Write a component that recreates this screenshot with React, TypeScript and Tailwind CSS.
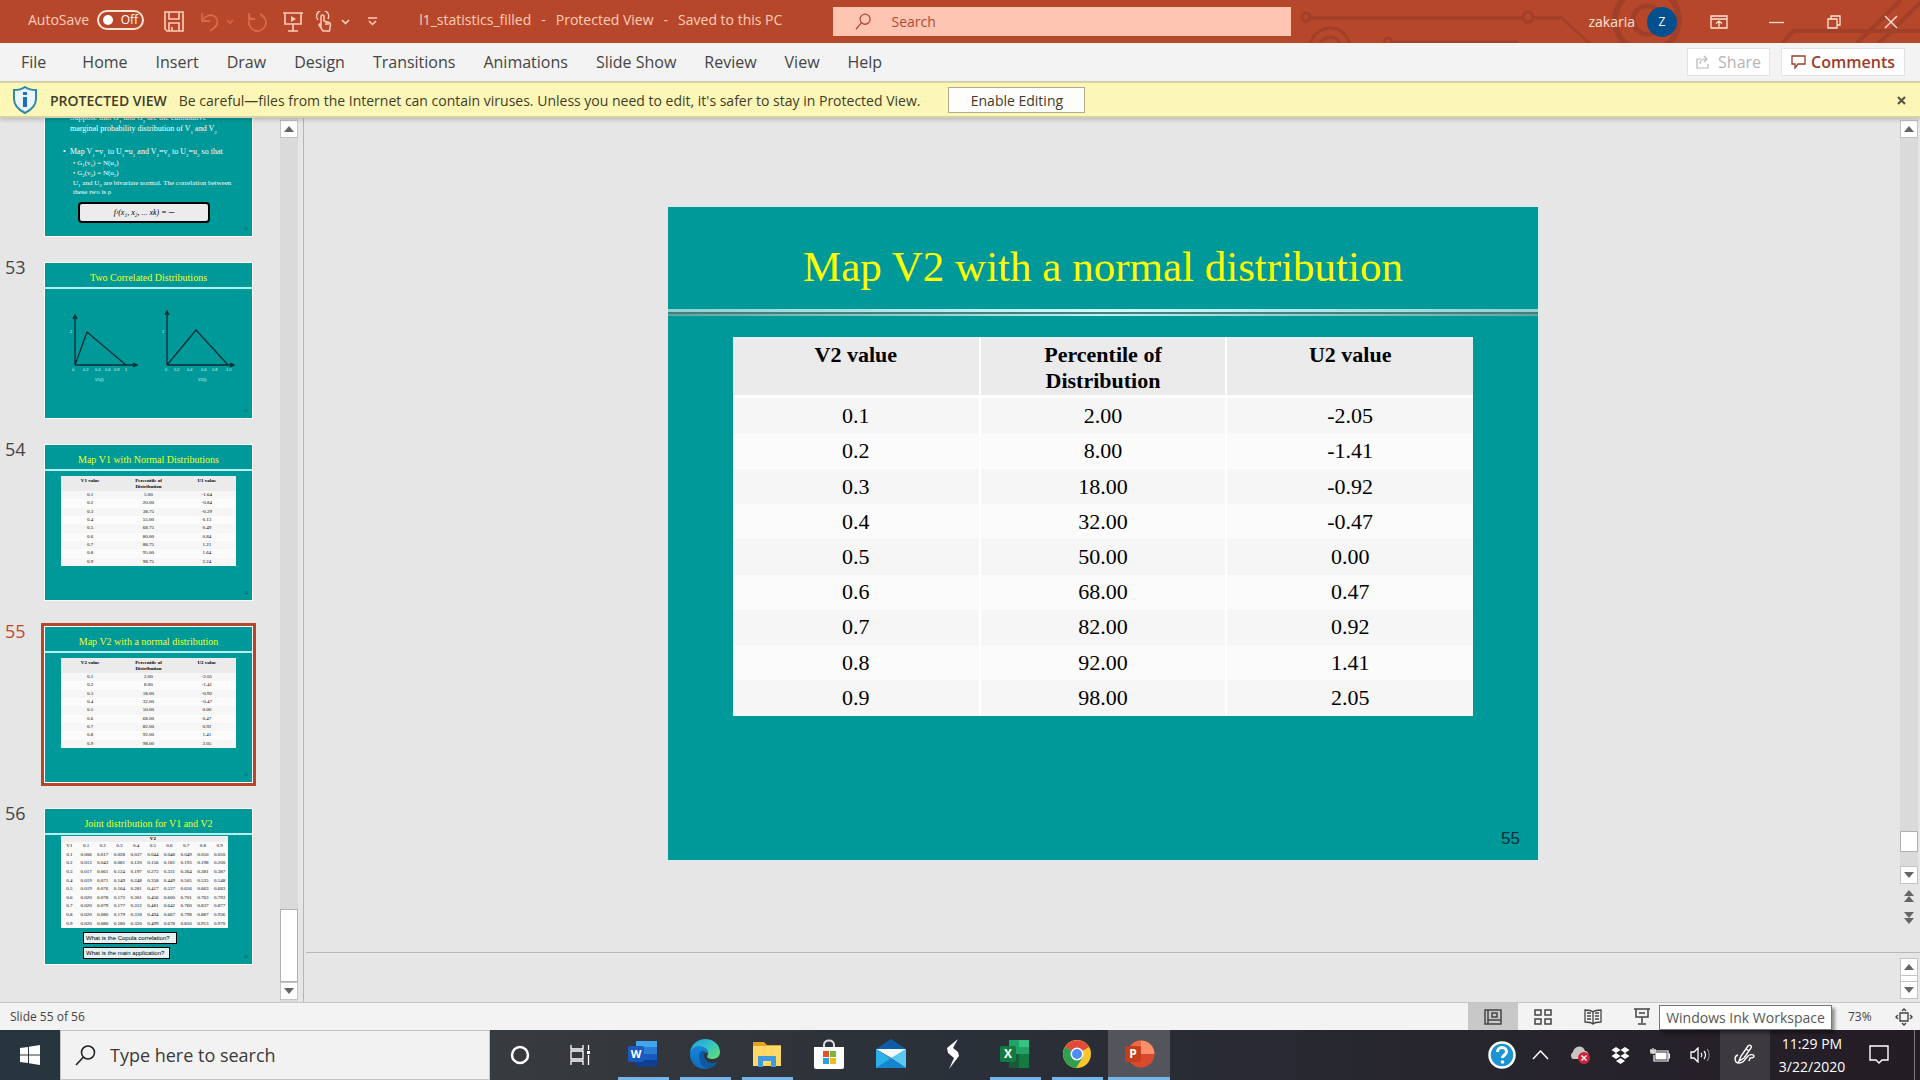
import React, { useState } from 'react';

const tabs = ['Home', 'Insert', 'Draw', 'Design', 'Transitions', 'Animations', 'Slide Show', 'Review', 'View', 'Help'];

const v1Rows = [
  ['0.1', '5.00', '-1.64'],
  ['0.2', '20.00', '-0.84'],
  ['0.3', '38.75', '-0.29'],
  ['0.4', '55.00', '0.13'],
  ['0.5', '68.75', '0.49'],
  ['0.6', '80.00', '0.84'],
  ['0.7', '88.75', '1.21'],
  ['0.8', '95.00', '1.64'],
  ['0.9', '98.75', '2.24'],
];

const v2Rows = [
  ['0.1', '2.00', '-2.05'],
  ['0.2', '8.00', '-1.41'],
  ['0.3', '18.00', '-0.92'],
  ['0.4', '32.00', '-0.47'],
  ['0.5', '50.00', '0.00'],
  ['0.6', '68.00', '0.47'],
  ['0.7', '82.00', '0.92'],
  ['0.8', '92.00', '1.41'],
  ['0.9', '98.00', '2.05'],
];

const jointRows = [
  'V1 0.1 0.2 0.3 0.4 0.5 0.6 0.7 0.8 0.9',
  '0.1 0.006 0.017 0.028 0.037 0.044 0.048 0.049 0.050 0.050',
  '0.2 0.013 0.043 0.081 0.120 0.156 0.181 0.193 0.198 0.200',
  '0.3 0.017 0.061 0.124 0.197 0.273 0.331 0.364 0.381 0.387',
  '0.4 0.019 0.071 0.149 0.248 0.358 0.449 0.505 0.535 0.548',
  '0.5 0.019 0.076 0.164 0.281 0.417 0.537 0.616 0.663 0.683',
  '0.6 0.020 0.078 0.173 0.301 0.456 0.600 0.701 0.763 0.793',
  '0.7 0.020 0.079 0.177 0.312 0.481 0.642 0.760 0.837 0.877',
  '0.8 0.020 0.080 0.179 0.318 0.494 0.667 0.798 0.887 0.936',
  '0.9 0.020 0.080 0.180 0.320 0.499 0.678 0.816 0.913 0.970',
].map((line) => line.split(' '));

const Sub = ({ children }: { children: React.ReactNode }) => (
  <span className="align-sub text-[5px] leading-none">{children}</span>
);

/* ---------- title bar ---------- */

const Circuit = () => (
  <svg className="absolute right-0 top-0 h-full w-[629px]" viewBox="0 0 629 43" fill="none" stroke="#a23f28" strokeWidth="3">
    <circle cx="15" cy="17" r="4" />
    <path d="M20 18h212" />
    <circle cx="237" cy="17" r="5" />
    <path d="M243 18h28l28 26" />
    <circle cx="39" cy="48" r="20" />
    <circle cx="39" cy="48" r="11" />
    <circle cx="97" cy="42" r="4" />
    <path d="M102 42h125" />
    <circle cx="356" cy="20" r="32" strokeWidth="6" />
    <circle cx="356" cy="20" r="14" strokeWidth="5" />
    <path d="M492 43l10-12h127M566 43l44-43M588 43l44-43" strokeWidth="4" />
  </svg>
);

const TitleBar = () => {
  const [autoSave, setAutoSave] = useState(false);
  return (
    <header className="relative grid h-[43px] shrink-0 grid-cols-[833fr_458fr_629fr] items-center bg-[#b7472a] text-[15px] text-[#ffcdbb]">
      <Circuit />
      <div className="flex items-center pb-2 pl-7">
        <label className="relative flex items-center gap-2 pt-1 text-sm leading-5">
          AutoSave
          <input type="checkbox" className="sr-only" checked={autoSave} onChange={() => setAutoSave(!autoSave)} />
          <span className="flex h-5 w-[47px] items-center justify-between rounded-full border-2 border-[#ffe3d8] pl-1 pr-1 text-xs text-white">
            <span className="size-[10px] rounded-full bg-white" />
            {autoSave ? 'On' : 'Off'}
          </span>
        </label>
        <button aria-label="Save" className="ml-5 pt-2">
          <svg width="20" height="21" viewBox="0 0 20 21" fill="none" stroke="#ffcdbb" strokeWidth="1.6">
            <path d="M1 1h18v19H3l-2-2zM5 1v7h10V1M5 20v-8h10v8M8 20v-4" />
          </svg>
        </button>
        <button aria-label="Undo" className="ml-4 flex items-center gap-1 pt-2">
          <svg width="22" height="20" viewBox="0 0 22 20" fill="none" stroke="#d9694b" strokeWidth="1.8">
            <path d="M2 1v8h8M2 9c3-5 8-7 12-5 5 3 4 9 0 12l-4 3" />
          </svg>
          <svg width="8" height="5" viewBox="0 0 8 5" fill="none" stroke="#d9694b" strokeWidth="1.6"><path d="M1 1l3 3 3-3" /></svg>
        </button>
        <button aria-label="Redo" className="ml-[13px] pt-2">
          <svg width="21" height="20" viewBox="0 0 21 20" fill="none" stroke="#d9694b" strokeWidth="1.8">
            <path d="M2 1v6h6M4 5c-4 5-2 13 6 14 8 0 12-9 6-15l-3-2" />
          </svg>
        </button>
        <button aria-label="Start from beginning" className="ml-[15px] pt-2">
          <svg width="20" height="20" viewBox="0 0 20 20" fill="none" stroke="#ffcdbb" strokeWidth="1.6">
            <path d="M0 1h20M2 1v11h16V1M10 12v7M5 19h10" />
            <path d="M8 4l5 3-5 3z" fill="#ffcdbb" stroke="none" />
          </svg>
        </button>
        <button aria-label="Touch mode" className="ml-3 flex items-center gap-2 pt-2">
          <svg width="18" height="21" viewBox="0 0 18 21" fill="none" stroke="#ffcdbb" strokeWidth="1.5">
            <path d="M3 9a6 6 0 1 1 10-1" />
            <path d="M6 14V5.500a1.500 1.500 0 0 1 3 0V10l5 1.500c1 .3 1.500 1 1.500 2l-1 6.500H8l-4-6c0-1.500 1-1.500 2 0zM11 11v3M13 12v2" />
          </svg>
          <svg width="9" height="6" viewBox="0 0 9 6" fill="none" stroke="#ffcdbb" strokeWidth="1.6"><path d="M1 1l3.500 3.500L8 1" /></svg>
        </button>
        <button aria-label="Customize Quick Access Toolbar" className="ml-[18px] pt-2">
          <svg width="9" height="9" viewBox="0 0 9 9" fill="none" stroke="#ffcdbb" strokeWidth="1.5"><path d="M0 1h9M1 4l3.500 3.500L8 4" /></svg>
        </button>
        <h1 className="ml-[42px] flex gap-[10px] whitespace-nowrap pt-1 text-sm leading-5">
          <span>l1_statistics_filled</span>
          <span>-</span>
          <span>Protected View</span>
          <span>-</span>
          <span>Saved to this PC</span>
        </h1>
      </div>
      <label className="flex h-[29px] items-center gap-5 bg-[#fec5b2] pl-[22px]">
        <svg width="18" height="19" viewBox="0 0 18 19" fill="none" stroke="#ad4b35" strokeWidth="1.4">
          <circle cx="11" cy="7" r="5.500" />
          <path d="M7 11l-6 7" />
        </svg>
        <input aria-label="Search" placeholder="Search" className="w-full bg-transparent text-sm outline-none placeholder:text-[#ad4b35]" />
      </label>
      <div className="relative flex h-full items-center justify-end text-white">
        <span className="mr-3 text-sm text-[#ffe3d8]">zakaria</span>
        <span className="mr-[33px] flex size-[30px] items-center justify-center rounded-full bg-[#03508f] text-xs">Z</span>
        <button aria-label="Ribbon display options" className="mr-[41px]">
          <svg width="18" height="14" viewBox="0 0 18 14" fill="none" stroke="#ffe3d8" strokeWidth="1.3">
            <path d="M1 1h16v12H1zM1 4h16M9 12V6M6 8.500L9 6l3 2.500" />
          </svg>
        </button>
        <button aria-label="Minimize" className="mr-[43px]">
          <svg width="15" height="14" viewBox="0 0 15 14" stroke="#ffe3d8" strokeWidth="1.3"><path d="M0 7.500h15" /></svg>
        </button>
        <button aria-label="Restore" className="mr-[43px]">
          <svg width="14" height="14" viewBox="0 0 14 14" fill="none" stroke="#ffe3d8" strokeWidth="1.3">
            <path d="M1 4h9v9H1zM4 4V1h9v9h-3" />
          </svg>
        </button>
        <button aria-label="Close" className="mr-[22px]">
          <svg width="14" height="14" viewBox="0 0 14 14" stroke="#ffe3d8" strokeWidth="1.4"><path d="M1 1l12 12M13 1L1 13" /></svg>
        </button>
      </div>
    </header>
  );
};

const Ribbon = () => (
  <nav className="flex h-[38px] shrink-0 items-center bg-[#f3f3f3] pl-[21px] pr-[15px] text-[16px] text-[#444]">
    <button className="mr-9">File</button>
    <div className="flex gap-7">
      {tabs.map((tab) => (
        <button key={tab}>{tab}</button>
      ))}
    </div>
    <button className="ml-auto flex h-7 items-center gap-2 border border-[#e3e3e3] bg-white px-2 text-[#b5b5b5]">
      <svg width="14" height="14" viewBox="0 0 14 14" fill="none" stroke="#b5b5b5" strokeWidth="1.2">
        <path d="M5 4H1v9h11V9M4 9c0-3 2-5 6-5M8 1l3 3-3 3" />
      </svg>
      Share
    </button>
    <button className="ml-[11px] flex h-7 items-center gap-[5px] border border-[#e3e3e3] bg-white px-[9px] text-[16px] font-semibold text-[#9c3c28]">
      <svg width="15" height="14" viewBox="0 0 15 14" fill="none" stroke="#9c3c28" strokeWidth="1.3">
        <path d="M1 1h13v8H7l-3 4V9H1z" />
      </svg>
      Comments
    </button>
  </nav>
);

const ProtectedBar = () => (
  <div className="z-10 flex h-[37px] shrink-0 items-center border-y-2 border-[#d5d1ab] bg-[#fcf7b6] pl-[13px] pr-[14px] pt-px text-[14px] text-[#3f3c2a] shadow-[0_2px_4px_rgba(0,0,0,0.18)]">
    <svg width="24" height="28" viewBox="0 0 24 28" fill="none">
      <path d="M12 1c3 2 7 3 11 3v9c0 7-5 11-11 14C6 24 1 20 1 13V4c4 0 8-1 11-3z" fill="#eaf6fb" stroke="#3187a8" strokeWidth="2" />
      <path d="M12 6v3M12 11v10" stroke="#1f6fc0" strokeWidth="4" />
    </svg>
    <strong className="ml-[13px] font-semibold">PROTECTED VIEW</strong>
    <p className="ml-3">Be careful—files from the Internet can contain viruses. Unless you need to edit, it's safer to stay in Protected View.</p>
    <button className="ml-7 h-[26px] w-[137px] border border-[#b0ac8c] bg-[#fdfdfb]">Enable Editing</button>
    <button aria-label="Close message" className="ml-auto">
      <svg width="9" height="9" viewBox="0 0 9 9" stroke="#555140" strokeWidth="2"><path d="M1 1l7 7M8 1L1 8" /></svg>
    </button>
  </div>
);

/* ---------- scroll bars ---------- */

const Arrow = ({ down = false }: { down?: boolean }) => (
  <svg width="10" height="6" viewBox="0 0 10 6" fill="#666">
    <path d={down ? 'M0 0h10L5 6z' : 'M0 6h10L5 0z'} />
  </svg>
);

const ScrollButton = ({ down = false, label }: { down?: boolean; label: string }) => (
  <button aria-label={label} className="flex h-[18px] w-full shrink-0 items-center justify-center border border-[#c3c3c3] bg-white">
    <Arrow down={down} />
  </button>
);

/* ---------- slides ---------- */

interface ValueTableProps {
  name: string;
  rows: string[][];
  small?: boolean;
}

const ValueTable = ({ name, rows, small = false }: ValueTableProps) => {
  const head = small ? 'h-[15px] px-2 pb-0 pt-[2px] text-[5px] leading-[6px]' : 'h-[60px] border-b-[3px] border-l-2 px-14 pb-0 pt-[5px] text-[22px] leading-[26px] first:border-l-0';
  const cell = small ? 'text-[5px] leading-[6px]' : 'border-l-2 text-[22px] leading-[26px] first:border-l-0';
  return (
    <table className={`w-full table-fixed text-center text-black ${small ? 'h-[90px]' : 'h-[379px]'}`}>
      <thead>
        <tr className="bg-[#ebebeb]">
          {[`V${name} value`, 'Percentile of Distribution', `U${name} value`].map((title) => (
            <th key={title} className={`border-white align-top font-bold ${head}`}>{title}</th>
          ))}
        </tr>
      </thead>
      <tbody>
        {rows.map((row) => (
          <tr key={row[0]} className="odd:bg-[#f6f6f6] even:bg-[#fbfbfb]">
            {row.map((value, i) => (
              <td key={i} className={`border-white p-0 ${cell}`}>{value}</td>
            ))}
          </tr>
        ))}
      </tbody>
    </table>
  );
};

const Thumb = ({ title, page, children }: { title: string; page: number; children: React.ReactNode }) => (
  <div className="relative h-[155px] font-['Liberation_Serif',serif]">
    <h3 className="flex h-[24px] items-center justify-center pt-1 text-[10px] font-normal text-[#f0ff20]">{title}</h3>
    <div className="h-[2px] bg-[#b5eeee]" />
    {children}
    <span className="absolute bottom-1 right-1 text-[4px] text-[#045]">{page}</span>
  </div>
);

const Slide52 = () => (
  <div className="relative flex h-[155px] flex-col justify-end px-[25px] pb-[13px] font-['Liberation_Serif',serif] text-white">
    <ul className="text-[8px] leading-[10px]">
      <li className="relative whitespace-nowrap before:absolute before:-left-[7px] before:content-['•']">
        Suppose that G<Sub>1</Sub> and G<Sub>2</Sub> are the cumulative
        <br />
        marginal probability distribution of V<Sub>1</Sub> and V<Sub>2</Sub>
      </li>
      <li className="relative mt-[13px] whitespace-nowrap before:absolute before:-left-[7px] before:content-['•']">
        Map V<Sub>1</Sub>=v<Sub>1</Sub> to U<Sub>1</Sub>=u<Sub>1</Sub> and V<Sub>2</Sub>=v<Sub>2</Sub> to U<Sub>2</Sub>=u<Sub>2</Sub> so that
      </li>
    </ul>
    <div className="text-[7px] leading-[10px]">
      <p className="pl-[3px]">• G<Sub>1</Sub>(v<Sub>1</Sub>) = N(u<Sub>1</Sub>)</p>
      <p className="pl-[3px]">• G<Sub>2</Sub>(v<Sub>2</Sub>) = N(u<Sub>2</Sub>)</p>
      <p className="whitespace-nowrap pl-[3px] leading-[8px]">
        U<Sub>1</Sub> and U<Sub>2</Sub> are bivariate normal. The correlation between
        <br />
        these two is ρ
      </p>
    </div>
    <p className="ml-2 mt-[6px] flex h-[21px] w-[132px] items-center justify-center rounded border-2 border-black bg-[#ececec] text-[8px] italic text-black">
      f<Sub>J</Sub>(x₁, x₂, ... xk) = ─
    </p>
    <span className="absolute bottom-1 right-1 text-[4px] text-[#045]">52</span>
  </div>
);

const Triangles = () => (
  <svg width="207" height="129" viewBox="0 26 207 129" fill="none" stroke="#0d2b33" strokeWidth="1.300">
    <path d="M30 102V53M28 56l2-4 2 4M30 102h61M88 100l4 2-4 2M30 102l12-33 39 33" />
    <path d="M122 102V49M120 52l2-4 2 4M122 102h66M185 100l4 2-4 2M122 102l29-35 32 35" />
    <g fill="#d6f5f5" stroke="none" fontSize="4" fontFamily="Liberation Sans">
      <text x="25" y="70">2</text>
      <text x="27" y="108">0</text>
      <text x="38" y="108">0.2</text>
      <text x="50" y="108">0.4</text>
      <text x="60" y="108">0.6</text>
      <text x="69" y="108">0.8</text>
      <text x="80" y="108">1</text>
      <text x="50" y="118">V1(t)</text>
      <text x="117" y="70">2</text>
      <text x="120" y="108">0</text>
      <text x="129" y="108">0.2</text>
      <text x="142" y="108">0.4</text>
      <text x="156" y="108">0.6</text>
      <text x="167" y="108">0.8</text>
      <text x="181" y="108">1.0</text>
      <text x="153" y="118">V2(t)</text>
    </g>
  </svg>
);

const JointTable = () => (
  <div className="pl-4 pt-px">
    <table className="h-[92px] w-[167px] table-fixed bg-[#fafafa] text-center text-[5px] leading-[6px] text-black">
      <thead>
        <tr className="bg-[#efefef]">
          <th />
          <th colSpan={9} className="p-0">V2</th>
        </tr>
      </thead>
      <tbody>
        {jointRows.map((row, r) => (
          <tr key={r}>
            {row.map((value, i) => (
              <td key={i} className="p-0">{value}</td>
            ))}
          </tr>
        ))}
      </tbody>
    </table>
    <div className="ml-[22px] mt-1 flex flex-col items-start gap-[3px] font-['Liberation_Sans',sans-serif] text-[6px] leading-[8px] text-black">
      <p className="w-[94px] whitespace-nowrap border border-black bg-[#e6f2f2] px-[2px] py-px">What is the Copula correlation?</p>
      <p className="w-[87px] whitespace-nowrap border border-black bg-[#e6f2f2] px-[2px] py-px">What is the main application?</p>
    </div>
  </div>
);

const thumbs = [
  { page: 52, body: <Slide52 /> },
  { page: 53, body: <Thumb title="Two Correlated Distributions" page={53}><Triangles /></Thumb> },
  {
    page: 54,
    body: (
      <Thumb title="Map V1 with Normal Distributions" page={54}>
        <div className="px-4 pt-[5px]"><ValueTable name="1" rows={v1Rows} small /></div>
      </Thumb>
    ),
  },
  {
    page: 55,
    body: (
      <Thumb title="Map V2 with a normal distribution" page={55}>
        <div className="px-4 pt-[5px]"><ValueTable name="2" rows={v2Rows} small /></div>
      </Thumb>
    ),
  },
  { page: 56, body: <Thumb title="Joint distribution for V1 and V2" page={56}><JointTable /></Thumb> },
];

const SlidePanel = () => {
  const [selected, setSelected] = useState(55);
  return (
    <aside className="flex w-[304px] shrink-0 border-r border-[#b5b5b5] pr-[5px]">
      <ol className="flex min-w-0 flex-1 flex-col justify-end gap-[27px] overflow-hidden pb-[38px]">
        {thumbs.map(({ page, body }, i) => (
          <li key={page} className="flex shrink-0">
            {/* the first slide is scrolled half out of view, its number with it */}
            <span className={`w-[45px] shrink-0 pl-[5px] text-[18px] leading-[8px] ${page === selected ? 'text-[#c0492c]' : 'text-[#444]'}`}>
              {i > 0 && page}
            </span>
            <button
              onClick={() => setSelected(page)}
              className={`w-[207px] bg-[#009999] text-left ring-1 ring-white ${page === selected ? 'outline-[3px] outline-offset-1 outline-[#b7472a]' : ''}`}
            >
              {body}
            </button>
          </li>
        ))}
      </ol>
      <div className="flex w-[18px] flex-col bg-[#dadada] pb-[2px] pt-[2px]">
        <ScrollButton label="Scroll slides up" />
        <div className="flex-1" />
        <div className="h-[73px] border border-[#b0b0b0] bg-white" />
        <ScrollButton label="Scroll slides down" down />
      </div>
    </aside>
  );
};

const Editor = () => (
  <main className="flex min-w-0 flex-1 flex-col pl-[2px]">
    <div className="flex min-h-0 flex-1 border-b border-[#b8b8b8]">
      <section className="flex flex-1 items-center justify-center pb-1">
        <article className="relative h-[653px] w-[870px] bg-[#009999] font-['Liberation_Serif',serif] outline-1 outline-[#d9e9e9]">
          <h2 className="flex h-[102px] items-end justify-center pb-4 text-[43px] leading-[52px] text-[#ffff00]">Map V2 with a normal distribution</h2>
          <div className="h-[3px] bg-linear-to-r from-[#8fd0d0] via-[#ccffff] to-[#8fd0d0]" />
          <div className="h-[2px] bg-[#45807f]" />
          <div className="h-[2px] bg-linear-to-r from-[#5fa5a5] via-[#bdf0f0] to-[#5fa5a5]" />
          <div className="px-[65px] pt-[21px]">
            <ValueTable name="2" rows={v2Rows} />
          </div>
          <span className="absolute bottom-2 right-[18px] font-['Liberation_Sans',sans-serif] text-[17px] text-[#062f3a]">55</span>
        </article>
      </section>
      <div className="flex w-5 shrink-0 flex-col py-[2px] pr-[2px]">
        <div className="flex flex-1 flex-col bg-[#dadada]">
          <ScrollButton label="Previous" />
          <div className="flex-1" />
          <div className="mb-[14px] h-[21px] border border-[#b0b0b0] bg-white" />
          <ScrollButton label="Next" down />
        </div>
        <div className="flex h-[66px] flex-col items-center gap-[10px] pt-[6px]">
          <button aria-label="Previous slide" className="flex flex-col"><Arrow /><Arrow /></button>
          <button aria-label="Next slide" className="flex flex-col"><Arrow down /><Arrow down /></button>
        </div>
      </div>
    </div>
    <div className="flex h-[49px] shrink-0 justify-end pr-[2px] pt-[5px]">
      <div className="flex w-[18px] flex-col">
        <ScrollButton label="Scroll notes up" />
        <div className="h-[5px] border-x border-[#c3c3c3] bg-white" />
        <ScrollButton label="Scroll notes down" down />
      </div>
    </div>
  </main>
);

const StatusBar = () => (
  <footer className="flex h-7 shrink-0 items-center border-t border-[#c6c6c6] bg-[#f3f3f3] pl-[10px] text-[12px] text-[#444]">
    <span>Slide 55 of 56</span>
    <button aria-label="Normal view" className="ml-auto flex h-full w-[50px] items-center justify-center bg-[#c8c8c8]">
      <svg width="18" height="16" viewBox="0 0 18 16" fill="none" stroke="#444" strokeWidth="1.500">
        <path d="M1 1h16v14H1zM4 1v14M4 11h13M8 4h5v4H8z" />
      </svg>
    </button>
    <button aria-label="Slide sorter" className="flex h-full w-[50px] items-center justify-center">
      <svg width="18" height="16" viewBox="0 0 18 16" fill="none" stroke="#444" strokeWidth="1.500">
        <path d="M1 1h6v5H1zM11 1h6v5h-6zM1 10h6v5H1zM11 10h6v5h-6z" />
      </svg>
    </button>
    <button aria-label="Reading view" className="flex h-full w-[49px] items-center justify-center">
      <svg width="18" height="16" viewBox="0 0 18 16" fill="none" stroke="#444" strokeWidth="1.300">
        <path d="M9 3C7 1 4 1 1 1v12c3 0 6 0 8 2 2-2 5-2 8-2V1c-3 0-6 0-8 2zv12M3 4h4M3 7h4M3 10h4M11 4h4M11 7h4M11 10h4" />
      </svg>
    </button>
    <div className="relative flex h-full w-[206px] items-center pl-[17px]">
      <button aria-label="Slide show">
        <svg width="16" height="17" viewBox="0 0 16 17" fill="none" stroke="#444" strokeWidth="1.500">
          <path d="M0 1h16M2 1v8h12V1M8 9v6M4 16h8M5 5h6" />
        </svg>
      </button>
      <div role="tooltip" className="absolute left-[42px] top-[2px] z-10 flex h-[25px] w-[173px] items-center justify-center whitespace-nowrap border border-[#767676] bg-white text-[14px] text-[#575757] shadow-[3px_3px_3px_rgba(0,0,0,0.4)]">
        Windows Ink Workspace
      </div>
    </div>
    <span className="ml-[25px] w-[47px]">73%</span>
    <button aria-label="Fit slide to window" className="mr-[7px]">
      <svg width="18" height="18" viewBox="0 0 18 18" fill="none" stroke="#444" strokeWidth="1.400">
        <path d="M5 5h8v8H5zM7 3l2-2 2 2M7 15l2 2 2-2M3 7L1 9l2 2M15 7l2 2-2 2" />
      </svg>
    </button>
  </footer>
);

/* ---------- taskbar ---------- */

const WordIcon = () => (
  <svg width="31" height="28" viewBox="0 0 31 28">
    <path d="M8 1h21v7H8z" fill="#41a5ee" />
    <path d="M8 7h21v7H8z" fill="#2b7cd3" />
    <path d="M8 14h21v6H8z" fill="#185abd" />
    <path d="M8 20h21v7H8z" fill="#103f91" />
    <rect x="0" y="6" width="16" height="16" rx="2" fill="#185abd" />
    <text x="8" y="18" fontSize="11" fontWeight="700" textAnchor="middle" fill="#fff" fontFamily="Open Sans">W</text>
  </svg>
);

const EdgeIcon = () => (
  <svg width="30" height="30" viewBox="0 0 30 30">
    <defs>
      <linearGradient id="edge-top" x1="0" y1="0" x2="1" y2="1">
        <stop offset="0" stopColor="#1b9de2" />
        <stop offset="0.45" stopColor="#35c1c9" />
        <stop offset="1" stopColor="#66e06a" />
      </linearGradient>
      <linearGradient id="edge-left" x1="0" y1="0" x2="0" y2="1">
        <stop offset="0" stopColor="#1686d9" />
        <stop offset="1" stopColor="#0f6cbd" />
      </linearGradient>
    </defs>
    <path d="M0 14C1 5 8 0 15 0c9 0 15 6 15 13 0 5-4 7-8 7-3 0-5-1-5-3 2-2 2-6-3-8-6-1-12 1-14 5z" fill="url(#edge-top)" />
    <path d="M0 15c0-5 5-8 9-8 6 0 10 4 9 8-2-3-7-1-7 4 0 6 7 9 15 5-3 4-7 6-11 6C7 30 0 24 0 15z" fill="url(#edge-left)" />
    <path d="M9 17c0-4 3-6 6-5-3 4 0 11 6 12 3 0 5 0 7-2-4 7-10 8-13 7-4-2-6-7-6-12z" fill="#0c59a4" />
  </svg>
);

const FolderIcon = () => (
  <svg width="30" height="26" viewBox="0 0 30 26">
    <path d="M1 1h11l3 3h14v6H1z" fill="#e0a526" />
    <path d="M1 5h28v20H1z" fill="#ffd866" />
    <path d="M6 26V15h18v11h-5v-6h-8v6z" fill="#3f9ae0" />
  </svg>
);

const StoreIcon = () => (
  <svg width="30" height="30" viewBox="0 0 30 30">
    <path d="M10 9V6c0-6 10-6 10 0v3" fill="none" stroke="#ddd" strokeWidth="2" />
    <path d="M0 8h30v20a2 2 0 0 1-2 2H2a2 2 0 0 1-2-2z" fill="#fff" />
    <path d="M9 12h6v6H9z" fill="#e7512a" />
    <path d="M16 12h6v6h-6z" fill="#7db73a" />
    <path d="M9 19h6v6H9z" fill="#2aa0dd" />
    <path d="M16 19h6v6h-6z" fill="#f5b91c" />
  </svg>
);

const MailIcon = () => (
  <svg width="30" height="29" viewBox="0 0 30 29">
    <path d="M0 10L15 0l15 10v4H0z" fill="#0e5da8" />
    <path d="M0 10h30L17 20z" fill="#f3f9fc" />
    <path d="M0 10l16 10L30 29H0z" fill="#2cb0ea" />
    <path d="M30 10v19L15 19z" fill="#5cc8f2" />
    <path d="M0 29l15-10 15 10z" fill="#1585cf" />
  </svg>
);

const BoltIcon = () => (
  <svg width="16" height="30" viewBox="0 0 16 30" fill="#fff">
    <path d="M13 0L2 9l1 5 6 5-5 11 10-13-1-4-5-4z" />
  </svg>
);

const ExcelIcon = () => (
  <svg width="31" height="28" viewBox="0 0 31 28">
    <path d="M9 0h20v28H9z" fill="#21a366" />
    <path d="M19 0h10v7H19z" fill="#33c481" />
    <path d="M9 14h10v14H9z" fill="#185c37" />
    <path d="M19 14h10v14H19z" fill="#107c41" />
    <rect x="0" y="6" width="16" height="16" rx="2" fill="#107c41" />
    <text x="8" y="18" fontSize="12" fontWeight="700" textAnchor="middle" fill="#fff" fontFamily="Open Sans">X</text>
  </svg>
);

const ChromeIcon = () => (
  <svg width="28" height="28" viewBox="0 0 28 28">
    <circle cx="14" cy="14" r="14" fill="#fbc52d" />
    <path d="M14 14L2 7a14 14 0 0 1 24 0z" fill="#e24a3b" />
    <path d="M2 7a14 14 0 0 0 11 21l7-11-6-3z" fill="#2da14f" />
    <circle cx="14" cy="14" r="6.500" fill="#fff" />
    <circle cx="14" cy="14" r="5" fill="#4d8df6" />
  </svg>
);

const PowerPointIcon = () => (
  <svg width="31" height="28" viewBox="0 0 31 28">
    <circle cx="17" cy="14" r="13.500" fill="#d9492b" />
    <path d="M17 .5A13.500 13.500 0 0 1 30.500 14H17z" fill="#ff8f6b" />
    <path d="M3.500 14A13.500 13.500 0 0 1 17 .5V14z" fill="#ed6c47" />
    <rect x="1" y="6" width="16" height="16" rx="2" fill="#c43e1c" />
    <text x="9" y="18" fontSize="12" fontWeight="700" textAnchor="middle" fill="#fff" fontFamily="Open Sans">P</text>
  </svg>
);

const apps = [
  { name: 'Word', icon: <WordIcon />, open: true },
  { name: 'Edge', icon: <EdgeIcon />, open: true },
  { name: 'File Explorer', icon: <FolderIcon />, open: true },
  { name: 'Store', icon: <StoreIcon />, open: false },
  { name: 'Mail', icon: <MailIcon />, open: false },
  { name: 'Shortcut', icon: <BoltIcon />, open: false },
  { name: 'Excel', icon: <ExcelIcon />, open: true },
  { name: 'Chrome', icon: <ChromeIcon />, open: true },
  { name: 'PowerPoint', icon: <PowerPointIcon />, open: true, active: true },
];

const Taskbar = () => (
  <div className="flex h-[50px] shrink-0 bg-linear-to-r from-[#474744] via-[#2a3039] via-50% to-[#241c24] text-white">
    <button aria-label="Start" className="flex w-[60px] shrink-0 items-center justify-center bg-[#27363e]">
      <svg width="20" height="20" viewBox="0 0 20 20" fill="#fff">
        <path d="M0 3l8-1v7.500H0zM9 1.800L20 0v9.500H9zM0 10.500h8V18l-8-1zM9 10.500h11V20L9 18.200z" />
      </svg>
    </button>
    <label className="flex w-[430px] items-center gap-[14px] border border-[#c4c4c4] bg-[#f2f2f2] pl-[14px]">
      <svg width="21" height="21" viewBox="0 0 21 21" fill="none" stroke="#222" strokeWidth="1.600">
        <circle cx="13" cy="7.500" r="6.500" />
        <path d="M8.500 12L1 20" />
      </svg>
      <input aria-label="Type here to search" placeholder="Type here to search" className="min-w-0 flex-1 bg-transparent text-[18px] outline-none placeholder:text-[#3a3a3a]" />
    </label>
    <button aria-label="Cortana" className="flex w-[60px] items-center justify-center">
      <svg width="20" height="20" viewBox="0 0 20 20" fill="none" stroke="#fff" strokeWidth="2.500"><circle cx="10" cy="10" r="8" /></svg>
    </button>
    <button aria-label="Task view" className="mr-[2px] flex w-[60px] items-center justify-center">
      <svg width="21" height="20" viewBox="0 0 21 20" fill="none" stroke="#fff" strokeWidth="1.300">
        <path d="M1 0v4h12V0M1 6h12v8H1zM1 20v-4h12v4M18.500 0v5M18.500 10v10" />
        <path d="M17 6h3v3h-3z" fill="#fff" stroke="none" />
      </svg>
    </button>
    {apps.map((app) => (
      <button
        key={app.name}
        aria-label={app.name}
        className={`flex w-[62px] flex-col items-center ${app.active ? 'bg-[#54555c]' : ''}`}
      >
        <span className="flex flex-1 items-center">{app.icon}</span>
        <span className={`h-[3px] ${app.open ? 'bg-[#76b5ea]' : ''} ${app.active ? 'w-full' : 'w-[51px]'}`} />
      </button>
    ))}
    <div className="ml-auto flex items-center">
      <button aria-label="Help" className="mr-4">
        <svg width="28" height="28" viewBox="0 0 28 28">
          <circle cx="14" cy="14" r="12.500" fill="#1c94d2" stroke="#fff" strokeWidth="2.500" />
          <path d="M9.500 11c0-6 9-6 9 0 0 3-4 3-4 6" fill="none" stroke="#fff" strokeWidth="3" />
          <circle cx="14.500" cy="21" r="1.800" fill="#fff" />
        </svg>
      </button>
      <button aria-label="Show hidden icons" className="mr-5">
        <svg width="17" height="10" viewBox="0 0 17 10" fill="none" stroke="#fff" strokeWidth="1.500"><path d="M1 9l7.500-8L16 9" /></svg>
      </button>
      <button aria-label="OneDrive" className="mr-5">
        <svg width="22" height="18" viewBox="0 0 22 18">
          <path d="M4 13a4 4 0 0 1 0-7c1-6 10-8 12-1 4 0 5 6 1 8z" fill="#c9c5c5" />
          <circle cx="15" cy="12" r="6" fill="#cc2538" />
          <path d="M12.500 9.500l5 5M17.500 9.500l-5 5" stroke="#fff" strokeWidth="1.400" />
        </svg>
      </button>
      <button aria-label="Dropbox" className="mr-5">
        <svg width="19" height="17" viewBox="0 0 19 17" fill="#fff">
          <path d="M5 0l4.500 3L5 6 .5 3zM14 0l4.500 3L14 6 9.500 3zM5 6l4.500 3L5 12 .5 9zM14 6l4.500 3-4.500 3-4.500-3zM9.500 11l4.500 3-4.500 3L5 14z" />
        </svg>
      </button>
      <button aria-label="Battery" className="mr-5">
        <svg width="20" height="14" viewBox="0 0 20 14" fill="none" stroke="#fff" strokeWidth="1.200">
          <path d="M6 3h12v10H4V7M18 6h1.500v4H18M0 3h6M3 0v6M1 1v4h4V1" />
          <path d="M6 5h10v6H6z" fill="#fff" />
        </svg>
      </button>
      <button aria-label="Volume" className="mr-[10px]">
        <svg width="20" height="16" viewBox="0 0 20 16" fill="none" stroke="#fff" strokeWidth="1.300">
          <path d="M1 5h3l4-4v14l-4-4H1zM11 6c1 1 1 3 0 4M14 4c2 2 2 6 0 8" />
          <path d="M17 2c3 3 3 9 0 12" stroke="#777" />
        </svg>
      </button>
      <button aria-label="Windows Ink Workspace" className="flex h-[50px] w-[50px] items-center justify-center bg-[#3c393f]">
        <svg width="22" height="22" viewBox="0 0 22 22" fill="none" stroke="#fff" strokeWidth="1.400">
          <path d="M5 17l2-5L14 2c2-2 4 0 3 2l-7 10zM12 5l3 2M4 11c-4 1-4 8 1 8 4 0 5-2 8-6 2-3 7-3 7-1s-2 2-4 2l-1 3" />
        </svg>
      </button>
      <div className="w-[84px] text-center text-[14px] leading-[23px]">
        <p>11:29 PM</p>
        <p>3/22/2020</p>
      </div>
      <button aria-label="Notifications" className="ml-[15px] mr-[25px]">
        <svg width="20" height="20" viewBox="0 0 20 20" fill="none" stroke="#fff" strokeWidth="1.400">
          <path d="M1 1h18v14h-6l-3 3-3-3H1z" />
        </svg>
      </button>
      <button aria-label="Show desktop" className="h-[50px] w-[6px] border-l border-[#777]" />
    </div>
  </div>
);

export default function App() {
  return (
    <div className="flex h-screen flex-col overflow-hidden bg-[#e6e6e6] font-['Open_Sans','Noto_Sans',sans-serif]">
      <TitleBar />
      <Ribbon />
      <ProtectedBar />
      <div className="flex min-h-0 flex-1">
        <SlidePanel />
        <Editor />
      </div>
      <StatusBar />
      <Taskbar />
    </div>
  );
}
